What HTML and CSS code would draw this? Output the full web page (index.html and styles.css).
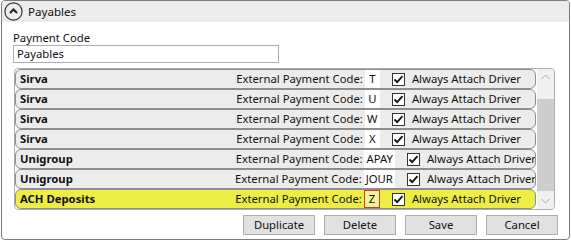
FILE: index.html
```html
<!DOCTYPE html>
<html>
<head>
<meta charset="utf-8">
<link rel="stylesheet" href="styles.css">
</head>
<body>
<div class="panel">
  <div class="header">
    <svg class="collapse" width="19" height="19" viewBox="0 0 19 19">
      <circle cx="9.5" cy="9.5" r="8.6" fill="none" stroke="#333" stroke-width="1.2"/>
      <path d="M6 11 L9.5 7.5 L13 11" fill="none" stroke="#222" stroke-width="2"/>
    </svg>
    <span class="title">Payables</span>
  </div>
  <div class="body">
    <div class="field-label">Payment Code</div>
    <div class="textbox">Payables</div>
    <div class="list">
      <div class="rows">
        <div class="row">
          <span class="name">Sirva</span>
          <div class="right">
            <span class="ext">External Payment Code:</span>
            <span class="code">T</span>
            <span class="check"><svg width="13" height="13" viewBox="0 0 13 13"><path d="M2.5 6.5 L5.2 9.2 L10.5 3.2" fill="none" stroke="#111" stroke-width="1.8"/></svg></span>
            <span class="attach">Always Attach Driver</span>
          </div>
        </div>
        <div class="row">
          <span class="name">Sirva</span>
          <div class="right">
            <span class="ext">External Payment Code:</span>
            <span class="code">U</span>
            <span class="check"><svg width="13" height="13" viewBox="0 0 13 13"><path d="M2.5 6.5 L5.2 9.2 L10.5 3.2" fill="none" stroke="#111" stroke-width="1.8"/></svg></span>
            <span class="attach">Always Attach Driver</span>
          </div>
        </div>
        <div class="row">
          <span class="name">Sirva</span>
          <div class="right">
            <span class="ext">External Payment Code:</span>
            <span class="code">W</span>
            <span class="check"><svg width="13" height="13" viewBox="0 0 13 13"><path d="M2.5 6.5 L5.2 9.2 L10.5 3.2" fill="none" stroke="#111" stroke-width="1.8"/></svg></span>
            <span class="attach">Always Attach Driver</span>
          </div>
        </div>
        <div class="row">
          <span class="name">Sirva</span>
          <div class="right">
            <span class="ext">External Payment Code:</span>
            <span class="code">X</span>
            <span class="check"><svg width="13" height="13" viewBox="0 0 13 13"><path d="M2.5 6.5 L5.2 9.2 L10.5 3.2" fill="none" stroke="#111" stroke-width="1.8"/></svg></span>
            <span class="attach">Always Attach Driver</span>
          </div>
        </div>
        <div class="row wide">
          <span class="name">Unigroup</span>
          <div class="right">
            <span class="ext">External Payment Code:</span>
            <span class="code">APAY</span>
            <span class="check"><svg width="13" height="13" viewBox="0 0 13 13"><path d="M2.5 6.5 L5.2 9.2 L10.5 3.2" fill="none" stroke="#111" stroke-width="1.8"/></svg></span>
            <span class="attach">Always Attach Driver</span>
          </div>
        </div>
        <div class="row wide">
          <span class="name">Unigroup</span>
          <div class="right">
            <span class="ext">External Payment Code:</span>
            <span class="code">JOUR</span>
            <span class="check"><svg width="13" height="13" viewBox="0 0 13 13"><path d="M2.5 6.5 L5.2 9.2 L10.5 3.2" fill="none" stroke="#111" stroke-width="1.8"/></svg></span>
            <span class="attach">Always Attach Driver</span>
          </div>
        </div>
        <div class="row selected">
          <span class="name">ACH Deposits</span>
          <div class="right">
            <span class="ext">External Payment Code:</span>
            <span class="code focus">Z</span>
            <span class="check"><svg width="13" height="13" viewBox="0 0 13 13"><path d="M2.5 6.5 L5.2 9.2 L10.5 3.2" fill="none" stroke="#111" stroke-width="1.8"/></svg></span>
            <span class="attach">Always Attach Driver</span>
          </div>
        </div>
      </div>
      <div class="scrollbar">
        <div class="arrow"><svg width="9" height="6" viewBox="0 0 9 6"><path d="M0.5 5 L4.5 1 L8.5 5" fill="none" stroke="#a6a6a6" stroke-width="1"/></svg></div>
        <div class="track">
          <div class="thumb"></div>
        </div>
        <div class="arrow"><svg width="9" height="6" viewBox="0 0 9 6"><path d="M0.5 1 L4.5 5 L8.5 1" fill="none" stroke="#a6a6a6" stroke-width="1"/></svg></div>
      </div>
    </div>
    <div class="buttons">
      <button class="btn">Duplicate</button>
      <button class="btn">Delete</button>
      <button class="btn">Save</button>
      <button class="btn">Cancel</button>
    </div>
  </div>
</div>
</body>
</html>
```
FILE: styles.css
```css
html, body {
  margin: 0;
  padding: 0;
  background: #ffffff;
}
body {
  font-family: "Noto Sans", "Open Sans", sans-serif;
  font-size: 11.3px;
  color: #111;
}
.panel {
  margin-left: 1px;
  width: 569px;
  height: 240px;
  box-sizing: border-box;
  border: 1px solid #7d7d7d;
  border-radius: 4px;
  overflow: hidden;
  background: #fff;
}
.header {
  height: 21px;
  background: #ececec;
  display: flex;
  align-items: center;
  padding-left: 2px;
}
.collapse {
  display: block;
}
.title {
  margin-left: 5px;
  font-size: 11.6px;
  line-height: 16px;
}
.body {
  padding: 8px 0 0 11px;
}
.field-label {
  line-height: 15px;
  height: 15px;
}
.textbox {
  width: 266px;
  height: 18px;
  box-sizing: border-box;
  border: 1px solid #abadb3;
  padding-left: 3px;
  line-height: 16px;
}
.list {
  margin-top: 5px;
  margin-left: 1px;
  width: 541px;
  height: 142px;
  box-sizing: border-box;
  border: 1px solid #adadad;
  border-radius: 4px;
  display: flex;
  overflow: hidden;
}
.rows {
  flex: 1;
  min-width: 0;
  display: flex;
  flex-direction: column;
}
.row {
  height: 20px;
  flex-shrink: 0;
  box-sizing: border-box;
  border: 1px solid #8e8e8e;
  border-radius: 6px;
  background: #ececec;
  display: flex;
  align-items: center;
  overflow: hidden;
  margin-right: 1px;
}
.row.selected {
  background: #eded45;
}
.name {
  font-weight: bold;
  padding-left: 4px;
  flex: 1;
  white-space: nowrap;
  line-height: 16px;
}
.right {
  display: flex;
  align-items: center;
  flex-shrink: 0;
  padding-right: 14px;
  white-space: nowrap;
}
.row.wide .right {
  margin-right: -15px;
}
.ext {
  line-height: 16px;
}
.code {
  margin-left: 2px;
  min-width: 15px;
  height: 18px;
  box-sizing: border-box;
  background: #fff;
  padding: 0 1px;
  text-align: center;
  line-height: 18px;
}
.row.wide .code {
  padding: 0 2px;
}
.code.focus {
  background: #f4f49a;
  border: 1px solid #e0302a;
  line-height: 16px;
  min-width: 16px;
  padding: 0;
}
.check {
  margin-left: 12px;
  width: 13px;
  height: 13px;
  box-sizing: border-box;
  border: 1px solid #333;
  background: #fff;
  display: flex;
  align-items: center;
  justify-content: center;
}
.check svg {
  display: block;
  flex-shrink: 0;
}
.attach {
  margin-left: 7px;
  line-height: 16px;
}
.scrollbar {
  width: 17px;
  flex-shrink: 0;
  background: #f0f0f0;
  display: flex;
  flex-direction: column;
}
.arrow {
  height: 17px;
  display: flex;
  align-items: center;
  justify-content: center;
}
.arrow svg {
  display: block;
}
.track {
  flex: 1;
  padding-top: 13px;
  padding-bottom: 2px;
}
.thumb {
  height: 92px;
  background: #cdcdcd;
}
.buttons {
  display: flex;
  justify-content: flex-end;
  gap: 9px;
  margin-top: 5px;
  padding-right: 11px;
}
.btn {
  width: 72px;
  height: 20px;
  box-sizing: border-box;
  border: 1px solid #adadad;
  background: #e1e1e1;
  font-family: "Noto Sans", "Open Sans", sans-serif;
  font-size: 11.3px;
  color: #111;
  padding: 0;
  margin: 0;
  line-height: 16px;
}
```
